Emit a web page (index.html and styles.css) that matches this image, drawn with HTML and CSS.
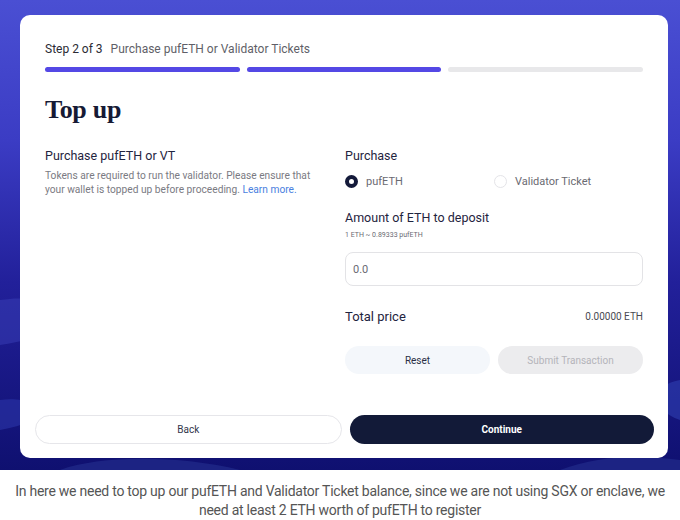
FILE: index.html
```html
<!DOCTYPE html>
<html>
<head>
<meta charset="utf-8">
<link rel="stylesheet" href="styles.css">
</head>
<body>
<div class="hero">
  <svg class="waves" viewBox="0 0 680 470" preserveAspectRatio="none">
    <path d="M0 300 C 60 290, 100 330, 0 345 Z" fill="#3a3fb8" opacity="0.5"/>
    <path d="M0 400 C 40 395, 60 420, 0 430 Z" fill="#2b36a8" opacity="0.6"/>
    <path d="M680 380 C 650 385, 650 410, 680 420 Z" fill="#2f3fb0" opacity="0.6"/>
    <path d="M60 470 C 100 455, 180 455, 240 470 Z" fill="#24308f" opacity="0.6"/>
    <path d="M560 470 C 600 455, 640 455, 680 460 L680 470 Z" fill="#24308f" opacity="0.6"/>
  </svg>
  <div class="card">
    <div class="step"><span class="step-num">Step 2 of 3</span><span class="step-name">Purchase pufETH or Validator Tickets</span></div>
    <div class="progress">
      <div class="seg on"></div>
      <div class="seg on"></div>
      <div class="seg"></div>
    </div>
    <h1 class="title">Top up</h1>
    <div class="cols">
      <div class="left">
        <div class="label">Purchase pufETH or VT</div>
        <p class="desc">Tokens are required to run the validator. Please ensure that your wallet is topped up before proceeding. <a class="link">Learn more.</a></p>
      </div>
      <div class="right">
        <div class="label">Purchase</div>
        <div class="radios">
          <div class="radio"><span class="dot checked"></span>pufETH</div>
          <div class="radio"><span class="dot"></span>Validator Ticket</div>
        </div>
        <div class="label amt">Amount of ETH to deposit</div>
        <div class="rate">1 ETH ~ 0.89333 pufETH</div>
        <div class="input">0.0</div>
        <div class="total"><span class="total-label">Total price</span><span class="total-val">0.00000 ETH</span></div>
        <div class="actions">
          <div class="btn reset">Reset</div>
          <div class="btn submit">Submit Transaction</div>
        </div>
      </div>
    </div>
    <div class="footer">
      <div class="fbtn back">Back</div>
      <div class="fbtn cont">Continue</div>
    </div>
  </div>
</div>
<p class="caption">In here we need to top up our pufETH and Validator Ticket balance, since we are not using SGX or enclave, we need at least 2 ETH worth of pufETH to register</p>
</body>
</html>
```

FILE: styles.css
```css
* { box-sizing: border-box; }
html, body { margin: 0; padding: 0; background: #fff; }
body { font-family: Roboto, "Liberation Sans", sans-serif; width: 680px; }
.hero {
  position: relative;
  height: 470px;
  padding: 15px 12px 0 20px;
  background: linear-gradient(180deg, #4a4fd3 0%, #3b3cc4 30%, #22209a 60%, #0f1070 100%);
  overflow: hidden;
}
.waves { position: absolute; left: 0; top: 0; width: 680px; height: 470px; }
.card {
  position: relative;
  background: #fff;
  border-radius: 10px;
  height: 443px;
  padding: 27px 25px 0 25px;
}
.step { font-size: 12px; line-height: 14px; color: #333; }
.step-num { color: #2a2a33; margin-right: 8px; }
.step-name { color: #5f5f68; }
.progress { display: flex; gap: 7px; margin-top: 11px; }
.seg { flex: 1; height: 5px; border-radius: 3px; background: #e8e8ea; }
.seg.on { background: #5448e5; }
.title {
  font-family: "Liberation Serif", "DejaVu Serif", serif;
  font-size: 26px; font-weight: 700; color: #161a35;
  margin: 22px 0 0 0; line-height: 32px; letter-spacing: -0.3px;
}
.cols { display: flex; margin-top: 22px; }
.left { width: 300px; }
.right { width: 298px; }
.label { font-size: 12.5px; color: #1f2440; line-height: 16px; }
.desc { margin: 5px 0 0 0; font-size: 10.2px; line-height: 14px; color: #7a7a82; width: 285px; }
.link { color: #4a7fe0; }
.radios { display: flex; margin-top: 10px; height: 14px; align-items: center; }
.radio { display: flex; align-items: center; width: 152px; font-size: 11px; color: #6a6a72; }
.dot { width: 13px; height: 13px; border-radius: 50%; border: 1px solid #e4e4e8; margin-right: 8px; background: #fff; }
.dot.checked { background: #fff; border: 4px solid #141a3a; }
.amt { margin-top: 22px; }
.rate { font-size: 7px; color: #6a6a72; margin-top: 5px; line-height: 9px; }
.input {
  margin-top: 12px; height: 34px; border: 1px solid #e3e3e6; border-radius: 8px;
  padding: 0 7px; display: flex; align-items: center; font-size: 11px; color: #6a6a72;
}
.total { display: flex; justify-content: space-between; align-items: center; margin-top: 21px; height: 18px; }
.total-label { font-size: 13px; color: #1f2440; }
.total-val { font-size: 10px; color: #4a4a52; }
.actions { display: flex; gap: 8px; margin-top: 21px; }
.btn { flex: 1; height: 28px; border-radius: 14px; display: flex; align-items: center; justify-content: center; font-size: 10px; }
.reset { background: #f4f7fb; color: #2a2e45; }
.submit { background: #ececee; color: #b4b4ba; }
.footer { display: flex; gap: 8px; margin: 41px -11px 0 -10px; }
.fbtn { flex: 1; height: 29px; border-radius: 15px; display: flex; align-items: center; justify-content: center; font-size: 10px; }
.back { border: 1px solid #e6e6ea; color: #33364a; background: #fff; }
.cont { background: #121a38; color: #fff; font-weight: 700; }
.caption {
  margin: 12px 0 0 0; text-align: center; font-size: 14px; line-height: 19px; color: #555;
  padding: 0; letter-spacing: -0.25px;
}
```
